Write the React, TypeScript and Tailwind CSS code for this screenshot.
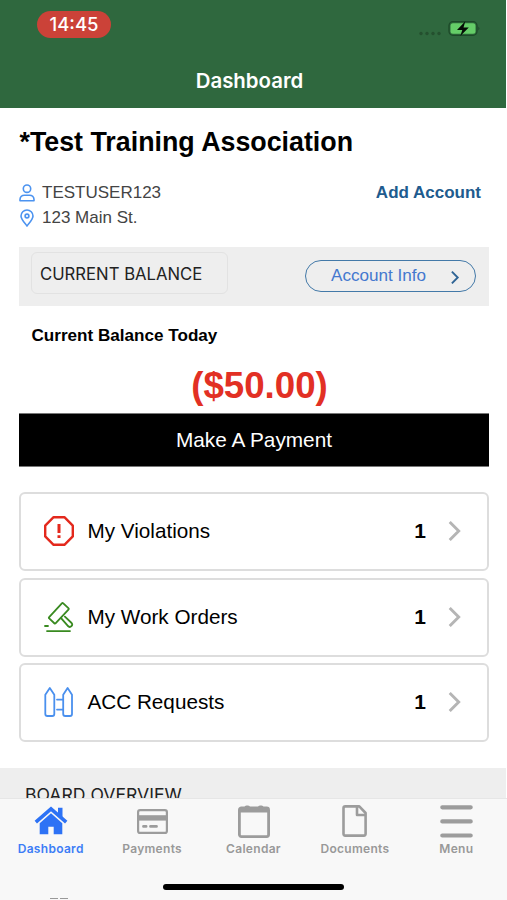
import type { ReactNode } from 'react';

const UserIcon = () => (
  <svg width="16" height="18" viewBox="0 0 16 18" fill="none" stroke="#4c93f0" strokeWidth="1.6" strokeLinejoin="round">
    <circle cx="8" cy="4.7" r="3.7" />
    <path d="M1 16.800v-1.200c0-2.600 2-4.400 4.400-4.400h5.200c2.400 0 4.400 1.800 4.400 4.400v1.200z" />
  </svg>
);

const PinIcon = () => (
  <svg width="14" height="18" viewBox="0 0 14 18" fill="none" stroke="#4c93f0" strokeWidth="1.6" strokeLinejoin="round">
    <path d="M7 17C5.600 14.800 1 10.600 1 7a6 6 0 0 1 12 0c0 3.600-4.600 7.800-6 10z" />
    <circle cx="7" cy="7" r="1.900" />
  </svg>
);

const ViolationIcon = () => (
  <svg width="30" height="30" viewBox="0 0 30 30" fill="none" stroke="#e3281c">
    <path d="M9.600 1.200h10.800L28.800 9.600v10.800L20.400 28.800H9.600L1.200 20.400V9.600z" strokeWidth="2.400" strokeLinejoin="round" />
    <path d="M15 8v9M15 19.200v2.900" strokeWidth="3" />
  </svg>
);

const GavelIcon = () => (
  <svg width="30" height="30" viewBox="0 0 30 30" fill="none" stroke="#398a20" strokeWidth="1.800" strokeLinecap="round" strokeLinejoin="round">
    <rect x="-10.300" y="-4.500" width="20.600" height="9" rx="1" transform="translate(14.800 11.300) rotate(-47)" />
    <path d="M17.300 16.300 24.300 24.300c2.300 1.900 5-1.200 3.300-3.300L20.900 14.600" />
    <path d="M1 24h3M3 29.100h23" />
  </svg>
);

const FenceIcon = () => (
  <svg width="30" height="30" viewBox="0 0 30 30" fill="none" stroke="#4a90ee" strokeWidth="1.800" strokeLinecap="round" strokeLinejoin="round">
    <path d="M1.300 7.800 5.800 1l4.500 6.800V27q0 2-2 2h-5q-2 0-2-2z" />
    <path d="M19.200 7.800 23.600 1 28 7.800V27q0 2-2 2h-4.800q-2 0-2-2z" />
    <path d="M13 12.600h6M13 22.600h6" />
  </svg>
);

const Chevron = ({ className }: { className: string }) => (
  <svg className={className} viewBox="0 0 12 20" fill="none" stroke="currentColor" strokeWidth="2.900">
    <path d="m1.200 1 9 9-9 9" />
  </svg>
);

const HomeIcon = () => (
  <svg width="34" height="30" viewBox="0 0 34 30" fill="#2d72f5">
    <path d="M1.800 16.200 17 3 32.200 16.200" fill="none" stroke="#2d72f5" strokeWidth="3.600" />
    <path d="M24 1.800h4.500v10.500L24 8.300z" />
    <path d="M17 7.300 28.300 17.300V28.300h-8.600v-7.500h-5.400v7.500H5.700v-11z" />
  </svg>
);

const CardIcon = () => (
  <svg width="31" height="25" viewBox="0 0 31 25" fill="none" stroke="#9c9c9c">
    <rect x="1.100" y="1.100" width="28.800" height="22.800" rx="2" strokeWidth="2.200" />
    <path d="M1 8.900h29" strokeWidth="5.400" />
    <path d="M6.500 17.400h2.600M13.500 17.400h6" strokeWidth="2.800" strokeLinecap="round" />
  </svg>
);

const CalendarIcon = () => (
  <svg width="32" height="33" viewBox="0 0 32 33" fill="none" stroke="#9c9c9c">
    <rect x="1.400" y="3" width="29.200" height="28.600" rx="2" strokeWidth="2.800" />
    <path d="M2 5h28" strokeWidth="5" />
    <path d="M8.500 2.500h1.500M22 2.500h1.500" strokeWidth="4" strokeLinecap="round" />
  </svg>
);

const DocumentIcon = () => (
  <svg width="25" height="32" viewBox="0 0 25 32" fill="none" stroke="#9c9c9c" strokeWidth="2.600" strokeLinejoin="round">
    <path d="M3.300 1.400h14l6.300 6.600V28.800q0 1.800-1.800 1.800H3.300q-1.800 0-1.800-1.800V3.200q0-1.800 1.800-1.800z" />
    <path d="M15 1.700v8.300h8.500" />
  </svg>
);

const MenuIcon = () => (
  <svg width="33" height="33" viewBox="0 0 33 33" stroke="#9c9c9c" strokeWidth="4.200" strokeLinecap="round">
    <path d="M2.300 2.300h28.400M2.300 16.400h28.400M2.300 30.500h28.400" />
  </svg>
);

const links = [
  { label: 'My Violations', count: 1, icon: <ViolationIcon /> },
  { label: 'My Work Orders', count: 1, icon: <GavelIcon /> },
  { label: 'ACC Requests', count: 1, icon: <FenceIcon /> },
];

const tabs = [
  { label: 'Dashboard', icon: <HomeIcon />, active: true },
  { label: 'Payments', icon: <CardIcon /> },
  { label: 'Calendar', icon: <CalendarIcon /> },
  { label: 'Documents', icon: <DocumentIcon /> },
  { label: 'Menu', icon: <MenuIcon /> },
];

const Header = () => (
  <header className="h-[108px] w-[506px] shrink-0 bg-[#2f683e] text-white">
    <div className="flex h-[54px] justify-between pl-[37px] pr-[26px]">
      <div className="mt-[11px] flex h-[27px] w-[74px] items-center justify-center rounded-full bg-[#cb4238] pt-px font-['Inter',sans-serif] text-[18.500px] font-medium">
        14:45
      </div>
      <svg className="mt-[18px]" width="62" height="20" viewBox="0 0 62 20">
        <g fill="#24502f">
          <circle cx="3" cy="15.500" r="1.700" />
          <circle cx="9" cy="15.500" r="1.700" />
          <circle cx="15" cy="15.500" r="1.700" />
          <circle cx="21" cy="15.500" r="1.700" />
        </g>
        <rect x="31" y="3.700" width="28" height="13.600" rx="4" fill="#2c6b3a" stroke="#1d4829" strokeWidth="1.300" />
        <rect x="32.500" y="5.200" width="25" height="10.600" rx="2.500" fill="#65cd68" />
        <path d="M60.400 8.500q2 2 0 4z" fill="#1d4829" />
        <path d="M47.300 3.300 39 12h5.300l-2 6 8.500-8.600h-5.300z" fill="#050b06" />
      </svg>
    </div>
    <h1 className="flex h-[54px] items-center justify-center pr-[7px] font-['Inter',sans-serif] text-[20.400px] font-semibold">
      Dashboard
    </h1>
  </header>
);

const InfoRow = ({ icon, children }: { icon: ReactNode; children: ReactNode }) => (
  <div className="flex h-[25px] items-center gap-[7px] text-[17px] text-[#444]">
    <span className="flex w-4 justify-center">{icon}</span>
    {children}
  </div>
);

const TabBar = () => (
  <nav className="h-[102px] shrink-0 border-t border-[#e6e6e6] bg-[#f8f8f8]">
    <div className="flex h-[64px]">
      {tabs.map((tab) => (
        <div key={tab.label} className={`flex flex-1 flex-col items-center ${tab.active ? 'text-[#3c7df6]' : 'text-[#999]'}`}>
          <span className="flex h-[42px] items-center pt-[2px]">{tab.icon}</span>
          <span className="font-['Inter',sans-serif] text-[12px] font-semibold leading-[15px] tracking-[0.300px]">{tab.label}</span>
        </div>
      ))}
    </div>
    <div className="ml-[163px] mt-[20.500px] h-[6px] w-[181px] rounded-full bg-black" />
    <div className="ml-[50px] mt-[8.500px] flex gap-[2px]">
      <span className="h-px w-[8px] bg-[#999]" />
      <span className="h-px w-[8px] bg-[#999]" />
    </div>
  </nav>
);

export default function App() {
  return (
    <div className="flex h-[900px] w-[507px] flex-col overflow-hidden bg-white font-['Liberation_Sans',Arial,sans-serif] text-black">
      <Header />
      <main className="flex h-[690px] shrink-0 flex-col overflow-hidden">
        <section className="h-[139px] shrink-0 px-[19px]">
          <h2 className="flex h-[70px] items-center whitespace-nowrap pb-[2px] pl-[0.500px] text-[26.800px] font-bold">
            *Test Training Association
          </h2>
          <div className="flex justify-between pr-[7px] pt-[2px]">
            <div>
              <InfoRow icon={<UserIcon />}>TESTUSER123</InfoRow>
              <InfoRow icon={<PinIcon />}>123 Main St.</InfoRow>
            </div>
            <a className="flex h-[25px] items-center text-[17px] font-bold text-[#205b8e]">Add Account</a>
          </div>
        </section>

        <section className="mx-[19px] w-[470px] shrink-0">
          <div className="flex h-[59px] justify-between bg-[#eeeeee] pl-[12px] pr-[13px]">
            <div className="mt-[5px] flex h-[42px] w-[197px] items-center rounded-md border border-[#e2e2e2] pl-[8px] pt-[3px] font-['Inter',sans-serif] text-[16.700px] text-[#222]">
              CURRENT BALANCE
            </div>
            <button className="mt-[13px] flex h-[32px] w-[171px] items-center justify-between rounded-full border-[1.5px] border-[#4379a8] pl-[25px] pr-[15px] text-[17.100px] text-[#4478cf]">
              Account Info
              <Chevron className="mt-[2px] h-[13px] w-[10px] text-[#2f6495]" />
            </button>
          </div>
          <h3 className="flex h-[59px] items-center pl-[12.500px] text-[17.100px] font-bold">Current Balance Today</h3>
          <p className="flex h-[48px] items-center justify-center pb-[6px] pl-[11px] text-[36.700px] font-bold text-[#e23024]">($50.00)</p>
          <button className="block h-[54px] w-full border-y border-[#777] bg-black text-[20.800px] text-white">Make A Payment</button>
        </section>

        <section className="mx-[19px] mt-[25px] flex w-[470px] shrink-0 flex-col gap-[6.500px]">
          {links.map((item) => (
            <div key={item.label} className="flex h-[79px] items-center rounded-md border-2 border-[#dddddd] pb-px pl-[23px] pr-[26px]">
              {item.icon}
              <span className="ml-[13.500px] flex-1 text-[20.700px]">{item.label}</span>
              <span className="mr-[22px] text-[21px] font-bold">{item.count}</span>
              <Chevron className="h-[20px] w-[13px] text-[#b5b5b5]" />
            </div>
          ))}
        </section>

        <section className="mt-[25.500px] h-[60px] w-[506px] shrink-0 bg-[#eeeeee] pl-[25px] pt-[14px] font-['Inter',sans-serif] text-[17.600px] text-[#222]">
          BOARD OVERVIEW
        </section>
      </main>
      <TabBar />
    </div>
  );
}
